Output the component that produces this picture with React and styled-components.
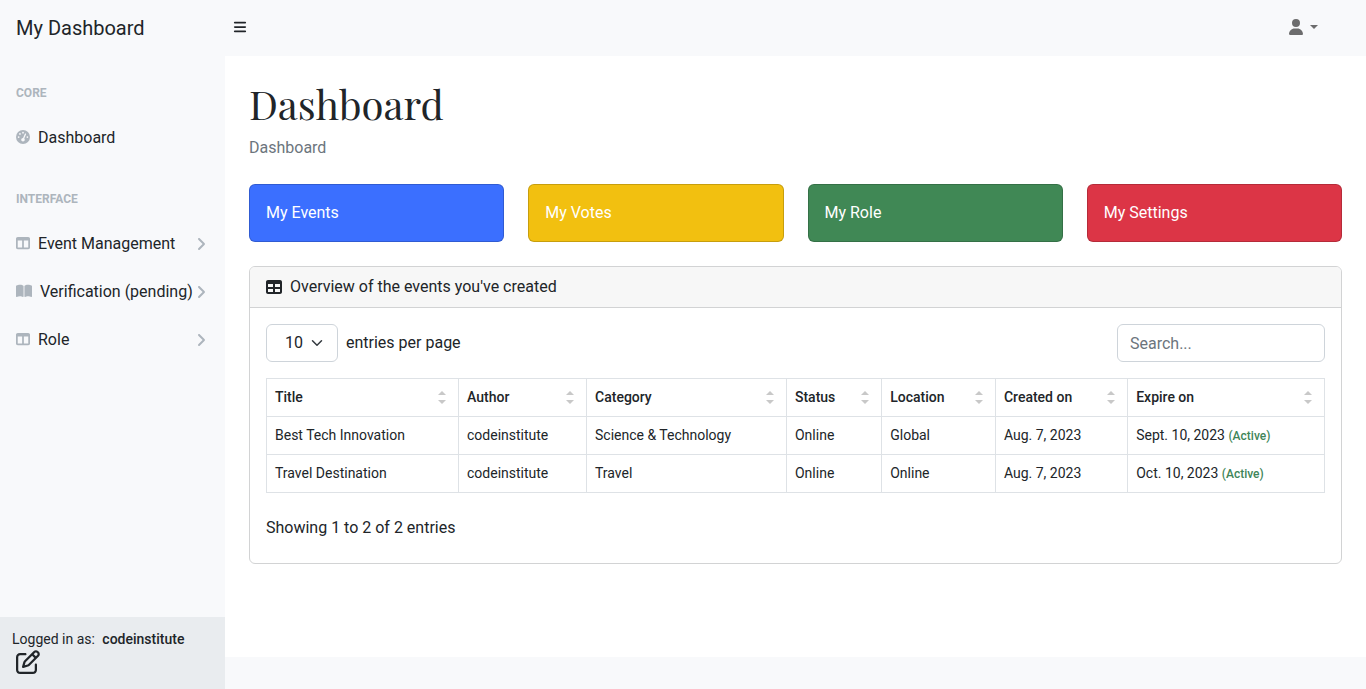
import React from 'react';
import styled, { createGlobalStyle } from 'styled-components';
import {
  FaBars,
  FaUser,
  FaGaugeHigh,
  FaTableColumns,
  FaBookOpen,
  FaAngleRight,
  FaTable,
  FaRegPenToSquare,
} from 'react-icons/fa6';

const GlobalStyle = createGlobalStyle`
  *, *::before, *::after { box-sizing: border-box; }
  body {
    margin: 0;
    font-family: Roboto, "Liberation Sans", sans-serif;
    font-size: 16px;
    font-weight: 400;
    line-height: 24px;
    color: #212529;
    background: #fff;
  }
  button, input, select { font: inherit; color: inherit; margin: 0; }
  a { color: inherit; text-decoration: none; }
  svg { display: block; flex: none; }
`;

const Page = styled.div`
  display: flex;
  flex-direction: column;
  min-height: 100vh;
`;

const TopNav = styled.nav`
  display: flex;
  align-items: center;
  height: 56px;
  padding-right: 48px;
  background: #f8f9fb;
`;

const Brand = styled.a`
  width: 225px;
  padding-left: 16px;
  font-size: 20px;
  line-height: 30px;
`;

const IconButton = styled.button`
  display: flex;
  align-items: center;
  gap: 6px;
  padding: 7px 8px 9px;
  border: 0;
  background: none;
  color: ${(p) => p.$color || '#212529'};
  font-size: ${(p) => p.$size}px;
`;

const UserButton = styled(IconButton)`
  margin-left: auto;
  padding-right: 0;
`;

const Caret = styled.span`
  border: 4px solid transparent;
  border-top-color: currentColor;
  border-bottom: 0;
`;

const Body = styled.div`
  display: flex;
  flex: 1;
`;

const Sidebar = styled.aside`
  display: flex;
  flex-direction: column;
  flex: none;
  width: 225px;
  background: #f8f9fb;
`;

const Menu = styled.nav`
  flex: 1;
`;

const MenuHeading = styled.div`
  padding: 28px 16px 12px;
  font-size: 12px;
  font-weight: 700;
  line-height: 18px;
  text-transform: uppercase;
  color: #adb5bd;
`;

const MenuLink = styled.a`
  display: flex;
  align-items: center;
  padding: 12px 16px;
  white-space: nowrap;
`;

const MenuIcon = styled.span`
  margin-right: 8px;
  padding-bottom: 2px;
  font-size: ${(p) => p.$size || 14}px;
  color: #adb5bd;
`;

const MenuArrow = styled.span`
  margin-left: auto;
  font-size: 16px;
  color: #adb5bd;
`;

const SidebarFooter = styled.div`
  height: 72px;
  padding: 12px;
  font-size: 14px;
  line-height: 21px;
  background: #e9ecef;
`;

const UserName = styled.strong`
  margin-left: 4px;
  font-weight: 500;
`;

const EditLink = styled.a`
  display: inline-block;
  padding: 0 4px;
  font-size: 24px;
`;

const Content = styled.div`
  display: flex;
  flex: 1;
  flex-direction: column;
  min-width: 0;
`;

const Main = styled.main`
  flex: 1;
  padding: 24px;
`;

const PageTitle = styled.h1`
  margin: 0 0 8px;
  font-family: "Playfair Display", "Liberation Serif", serif;
  font-size: 40px;
  font-weight: 400;
  line-height: 48px;
`;

const Breadcrumb = styled.ol`
  margin: 0 0 24px;
  padding: 0;
  list-style: none;
  color: #6c757d;
`;

const Tiles = styled.div`
  display: grid;
  grid-template-columns: repeat(4, 1fr);
  gap: 24px;
  margin-bottom: 24px;
`;

const Tile = styled.a`
  padding: 16px;
  border: 1px solid rgba(0, 0, 0, 0.175);
  border-radius: 6px;
  background: ${(p) => p.$color};
  background-clip: border-box;
  color: #fff;
`;

const Card = styled.section`
  border: 1px solid #d2d3d4;
  border-radius: 6px;
`;

const CardHeader = styled.header`
  display: flex;
  align-items: center;
  gap: 8px;
  padding: 8px 16px;
  border-bottom: 1px solid #d2d3d4;
  border-radius: 5px 5px 0 0;
  background: #f7f7f7;
`;

const CardBody = styled.div`
  padding: 16px;
`;

const Toolbar = styled.div`
  display: flex;
  justify-content: space-between;
  margin-bottom: 16px;
`;

const PerPage = styled.label`
  display: flex;
  align-items: center;
  gap: 8px;
`;

const SelectBox = styled.span`
  position: relative;
`;

const Select = styled.select`
  display: block;
  width: 72px;
  height: 38px;
  padding: 6px 18px;
  border: 1px solid #ced4da;
  border-radius: 6px;
  background: #fff;
  appearance: none;
`;

const SelectArrow = styled.svg`
  position: absolute;
  right: 13px;
  top: 13px;
  pointer-events: none;
`;

const Search = styled.input`
  width: 208px;
  height: 38px;
  padding: 6px 12px;
  border: 1px solid #ced4da;
  border-radius: 6px;
  background: #fff;
  &::placeholder { color: #6c757d; opacity: 1; }
`;

const Table = styled.table`
  width: 100%;
  table-layout: fixed;
  border-collapse: collapse;
  font-size: 14px;
  line-height: 21px;
`;

const Col = styled.col`
  width: ${(p) => p.$share}%;
`;

const HeadCell = styled.th`
  padding: 8px;
  border: 1px solid #dee2e6;
  text-align: left;
`;

const Cell = styled.td`
  padding: 8px;
  border: 1px solid #dee2e6;
`;

const SortButton = styled.button`
  display: flex;
  align-items: center;
  justify-content: space-between;
  width: 100%;
  padding: 0 4px 0 0;
  border: 0;
  background: none;
  font-weight: 500;
  text-align: left;
`;

const Active = styled.span`
  font-size: 12px;
  font-weight: 500;
  line-height: 12px;
  color: #408558;
`;

const Summary = styled.div`
  margin-top: 16px;
  padding: 7px 0;
`;

const Footer = styled.footer`
  height: 32px;
  background: #f8f9fb;
`;

const SortIcon = () => (
  <svg width="8" height="13" viewBox="0 0 8 13" fill="#c8c8c8" aria-hidden="true">
    <path d="M0 4h8L4 0z" />
    <path d="M0 9h8l-4 4z" />
  </svg>
);

const interfaceLinks = [
  { label: 'Event Management', Icon: FaTableColumns },
  { label: 'Verification (pending)', Icon: FaBookOpen, size: 16 },
  { label: 'Role', Icon: FaTableColumns },
];

const tiles = [
  { label: 'My Events', color: '#3b6fff' },
  { label: 'My Votes', color: '#f2c010' },
  { label: 'My Role', color: '#408855' },
  { label: 'My Settings', color: '#dc3546' },
];

const columns = [
  { label: 'Title', share: 18.15 },
  { label: 'Author', share: 12.1 },
  { label: 'Category', share: 18.9 },
  { label: 'Status', share: 9 },
  { label: 'Location', share: 10.75 },
  { label: 'Created on', share: 12.5 },
  { label: 'Expire on', share: 18.6 },
];

const events = [
  ['Best Tech Innovation', 'codeinstitute', 'Science & Technology', 'Online', 'Global', 'Aug. 7, 2023', 'Sept. 10, 2023'],
  ['Travel Destination', 'codeinstitute', 'Travel', 'Online', 'Online', 'Aug. 7, 2023', 'Oct. 10, 2023'],
];

export default function App() {
  return (
    <Page>
      <GlobalStyle />
      <TopNav>
        <Brand href="#">My Dashboard</Brand>
        <IconButton type="button" $size={14} aria-label="Toggle menu">
          <FaBars />
        </IconButton>
        <UserButton type="button" $size={16} $color="#6c6c6d" aria-label="Account">
          <FaUser />
          <Caret />
        </UserButton>
      </TopNav>
      <Body>
        <Sidebar>
          <Menu>
            <MenuHeading>Core</MenuHeading>
            <MenuLink href="#">
              <MenuIcon><FaGaugeHigh /></MenuIcon>
              Dashboard
            </MenuLink>
            <MenuHeading>Interface</MenuHeading>
            {interfaceLinks.map(({ label, Icon, size }) => (
              <MenuLink href="#" key={label}>
                <MenuIcon $size={size}><Icon /></MenuIcon>
                {label}
                <MenuArrow><FaAngleRight /></MenuArrow>
              </MenuLink>
            ))}
          </Menu>
          <SidebarFooter>
            <div>Logged in as: <UserName>codeinstitute</UserName></div>
            <EditLink href="#" aria-label="Edit profile"><FaRegPenToSquare /></EditLink>
          </SidebarFooter>
        </Sidebar>
        <Content>
          <Main>
            <PageTitle>Dashboard</PageTitle>
            <Breadcrumb><li>Dashboard</li></Breadcrumb>
            <Tiles>
              {tiles.map((t) => (
                <Tile href="#" key={t.label} $color={t.color}>{t.label}</Tile>
              ))}
            </Tiles>
            <Card>
              <CardHeader>
                <FaTable />
                Overview of the events you've created
              </CardHeader>
              <CardBody>
                <Toolbar>
                  <PerPage>
                    <SelectBox>
                      <Select defaultValue="10">
                        <option>5</option>
                        <option>10</option>
                        <option>15</option>
                      </Select>
                      <SelectArrow width="16" height="12" viewBox="0 0 16 16" fill="none" stroke="#343a40" strokeWidth="2" strokeLinecap="round" strokeLinejoin="round">
                        <path d="m2 5 6 6 6-6" />
                      </SelectArrow>
                    </SelectBox>
                    entries per page
                  </PerPage>
                  <Search type="text" placeholder="Search..." aria-label="Search events" />
                </Toolbar>
                <Table>
                  <colgroup>
                    {columns.map((c) => <Col key={c.label} $share={c.share} />)}
                  </colgroup>
                  <thead>
                    <tr>
                      {columns.map((c) => (
                        <HeadCell key={c.label} scope="col">
                          <SortButton type="button">{c.label}<SortIcon /></SortButton>
                        </HeadCell>
                      ))}
                    </tr>
                  </thead>
                  <tbody>
                    {events.map((row) => (
                      <tr key={row[0]}>
                        {row.map((value, i) => (
                          <Cell key={columns[i].label}>
                            {value}
                            {i === row.length - 1 && <> <Active>(Active)</Active></>}
                          </Cell>
                        ))}
                      </tr>
                    ))}
                  </tbody>
                </Table>
                <Summary>Showing 1 to 2 of 2 entries</Summary>
              </CardBody>
            </Card>
          </Main>
          <Footer />
        </Content>
      </Body>
    </Page>
  );
}
